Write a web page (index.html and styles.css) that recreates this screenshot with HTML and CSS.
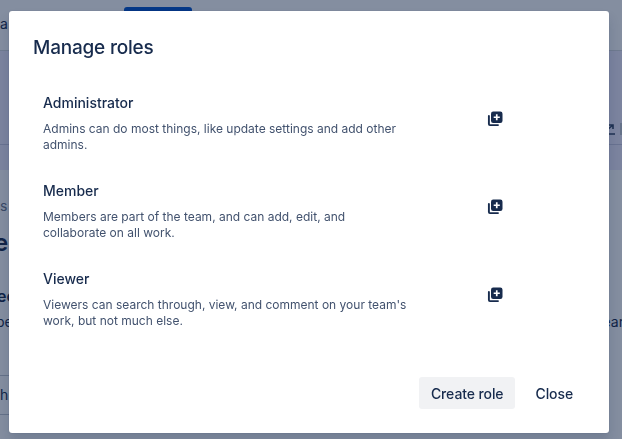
FILE: index.html
```html
<!DOCTYPE html>
<html lang="en">
<head>
    <meta charset="UTF-8">
    <meta name="viewport" content="width=device-width, initial-scale=1.0">
    <title>Manage roles</title>
    <link rel="stylesheet" href="styles.css">
</head>
<body>
    <!-- Page behind the dialog -->
    <div class="page">
        <div class="topbar">
            <span class="topbar-text">a</span>
            <span class="topbar-button"></span>
        </div>
        <div class="band">
            <div class="band-top">
                <svg class="band-icon" width="16" height="14" viewBox="0 0 16 14">
                    <path d="M2 12h12M6 8l6-5M8 3h4v4" fill="none" stroke="#344563" stroke-width="1.6"/>
                </svg>
                <span class="band-divider"></span>
            </div>
        </div>
        <div class="content">
            <div class="crumb">s</div>
            <div class="big">e</div>
            <div class="heading">ec</div>
            <div class="line"><span>be</span><span>ear</span></div>
            <div class="search">h</div>
        </div>
    </div>

    <div class="backdrop"></div>

    <!-- Manage roles dialog -->
    <div class="modal">
        <h1>Manage roles</h1>
        <div class="roles">
            <div class="role">
                <div class="role-text">
                    <h2>Administrator</h2>
                    <p>Admins can do most things, like update settings and add other admins.</p>
                </div>
                <svg class="role-icon" width="16" height="16" viewBox="0 0 16 16">
                    <path d="M1.9 5v8.1c0 .6.4 1 1 1H11" fill="none" stroke="#172b4d" stroke-width="1.9" stroke-linecap="round"/>
                    <rect x="4" y="0.5" width="11.5" height="11.5" rx="2.2" fill="#172b4d"/>
                    <path d="M9.75 3.2v6.1M6.7 6.25h6.1" stroke="#fff" stroke-width="1.7"/>
                </svg>
            </div>
            <div class="role">
                <div class="role-text">
                    <h2>Member</h2>
                    <p>Members are part of the team, and can add, edit, and collaborate on all work.</p>
                </div>
                <svg class="role-icon" width="16" height="16" viewBox="0 0 16 16">
                    <path d="M1.9 5v8.1c0 .6.4 1 1 1H11" fill="none" stroke="#172b4d" stroke-width="1.9" stroke-linecap="round"/>
                    <rect x="4" y="0.5" width="11.5" height="11.5" rx="2.2" fill="#172b4d"/>
                    <path d="M9.75 3.2v6.1M6.7 6.25h6.1" stroke="#fff" stroke-width="1.7"/>
                </svg>
            </div>
            <div class="role">
                <div class="role-text">
                    <h2>Viewer</h2>
                    <p>Viewers can search through, view, and comment on your team's work, but not much else.</p>
                </div>
                <svg class="role-icon" width="16" height="16" viewBox="0 0 16 16">
                    <path d="M1.9 5v8.1c0 .6.4 1 1 1H11" fill="none" stroke="#172b4d" stroke-width="1.9" stroke-linecap="round"/>
                    <rect x="4" y="0.5" width="11.5" height="11.5" rx="2.2" fill="#172b4d"/>
                    <path d="M9.75 3.2v6.1M6.7 6.25h6.1" stroke="#fff" stroke-width="1.7"/>
                </svg>
            </div>
        </div>
        <div class="actions">
            <button class="btn btn-create">Create role</button>
            <button class="btn">Close</button>
        </div>
    </div>
</body>
</html>
```

FILE: styles.css
```css
html, body { margin: 0; height: 100%; overflow: hidden; }
body { font-family: Inter, "Liberation Sans", sans-serif; color: #172b4d; background: #fff; }

/* Page behind */
.page { height: 439px; overflow: hidden; }
.topbar { height: 50px; border-bottom: 1px solid #d5d8de; display: flex; }
.topbar-text { font-size: 14px; line-height: 16px; padding-top: 16px; width: 124px; }
.topbar-button { width: 68px; height: 24px; margin-top: 7px; background: #0052cc; border-radius: 3px; }
.band { height: 119px; background: #eeeafc; }
.band-top { height: 94px; border-bottom: 1px solid #c9c8e0; display: flex; justify-content: flex-end; align-items: flex-end; gap: 3px; padding-bottom: 8px; box-sizing: border-box; }
.band-divider { width: 2px; height: 12px; background: #c1c7d0; margin-bottom: 1px; }
.content { display: flex; flex-direction: column; }
.crumb { font-size: 14px; line-height: 18px; padding-top: 27px; color: #6b778c; }
.big { font-size: 24px; font-weight: 600; line-height: 28px; padding-top: 14px; margin-left: -6px; }
.heading { font-size: 16px; font-weight: 600; line-height: 24px; padding-top: 27px; margin-left: -3px; }
.line { font-size: 14px; line-height: 18px; padding-top: 5px; display: flex; justify-content: space-between; margin: 0 -2px 0 -4px; }
.search { font-size: 14px; line-height: 38px; margin-top: 44px; width: 100px; border: 1px solid #c1c7d0; border-left: 0; }

/* Dim layer */
.backdrop { position: fixed; inset: 0; background: rgba(9, 30, 66, 0.5); }

/* Dialog */
.modal { position: fixed; left: 9px; top: 11px; width: 600px; height: 422px; box-sizing: border-box; padding: 23px 24px 24px; background: #fff; border-radius: 3px; display: flex; flex-direction: column; box-shadow: 0 0 1px rgba(9, 30, 66, 0.31), 0 8px 12px rgba(9, 30, 66, 0.15); }
h1 { margin: 0; font-size: 19px; font-weight: 500; line-height: 28px; letter-spacing: -0.2px; color: #172b4d; }
.roles { margin-top: 29px; display: flex; flex-direction: column; gap: 24px; padding-left: 10px; }
.role { display: flex; align-items: center; height: 64px; }
.role-text { width: 365px; }
h2 { margin: 0; font-size: 14px; font-weight: 500; line-height: 20px; color: #172b4d; }
.role p { margin: 8px 0 0; font-size: 12px; line-height: 16px; color: #42526e; }
.role-icon { margin: -8px 0 0 79px; }
.actions { margin-top: auto; display: flex; justify-content: flex-end; gap: 8px; }
.btn { height: 32px; padding: 0 12px; border: 0; border-radius: 3px; background: none; font-family: inherit; font-size: 14px; font-weight: 500; letter-spacing: -0.1px; color: #172b4d; }
.btn-create { background: #f1f2f4; }
```
